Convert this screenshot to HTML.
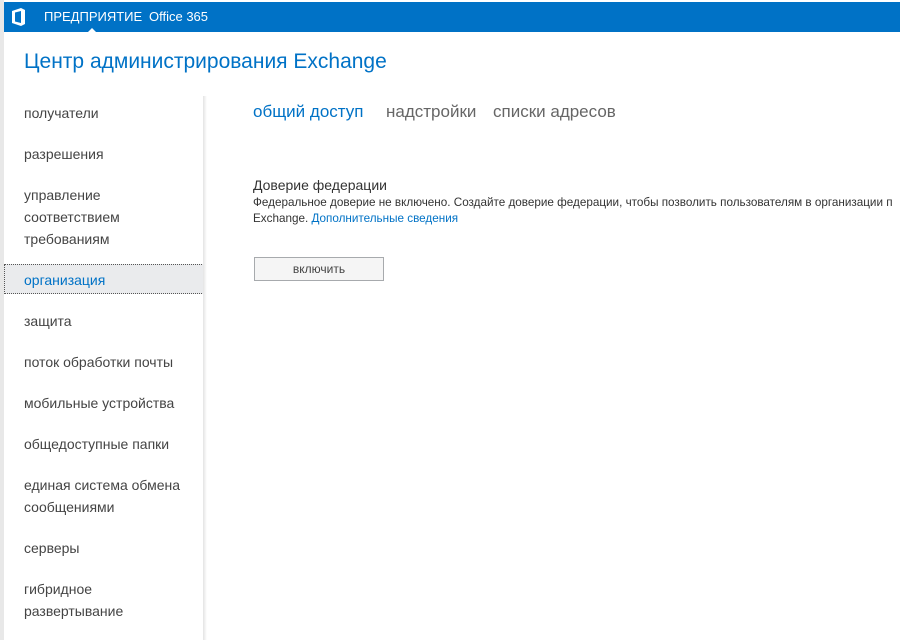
<!DOCTYPE html>
<html><head><meta charset="utf-8"><style>
*{margin:0;padding:0;box-sizing:border-box}
body{width:900px;height:640px;overflow:hidden;background:#fff;font-family:"Liberation Sans","DejaVu Sans",sans-serif;position:relative}
.top{position:absolute;left:4px;top:2px;width:896px;height:30px;background:#0072c6;color:#fff;font-size:13px}
.top span{position:absolute;top:7px}
.caret{position:absolute;left:84px;top:26px;width:0;height:0;border-left:4px solid transparent;border-right:4px solid transparent;border-bottom:4px solid #fff}
.lb{position:absolute;left:0;top:0;width:4px;height:640px;background:#e8e8e8}
h1{position:absolute;left:24px;top:50px;font-weight:normal;font-size:21px;color:#0072c6}
.shadow{position:absolute;left:203px;top:96px;width:4px;height:544px;background:linear-gradient(to right,#e4e4e4,#fff)}
.it{position:absolute;left:20px;font-size:14px;color:#444;line-height:22px}
.sel{position:absolute;left:4px;top:264px;width:200px;height:30px;background:#eaebed;border:1px dotted #555}
.tabs{position:absolute;top:102px;font-size:17px;color:#666}
.t2{position:absolute;left:253px;top:177px;font-size:14px;color:#333}
.t3{position:absolute;left:253px;top:195px;font-size:11.7px;color:#333;line-height:16px;white-space:nowrap}
.t3 a{color:#0072c6;text-decoration:none}
.btn{position:absolute;left:254px;top:257px;width:130px;height:24px;border:1px solid #a7aaad;background:#f5f5f5;font-size:12px;color:#444;text-align:center;line-height:22px}
</style></head><body>
<div class="lb"></div>
<div class="top">
<svg style="position:absolute;left:8px;top:6px" width="14" height="18" viewBox="0 0 14 18"><path d="M0 3 L9 0 L13 2 V16 L9 18 L0 15 Z M3 4.5 V13.5 L9 15 V3 Z" fill="#fff" fill-rule="evenodd"/></svg>
<span style="left:40px">ПРЕДПРИЯТИЕ</span><span style="left:145px">Office 365</span>
<div class="caret"></div></div>
<h1>Центр администрирования Exchange</h1>
<div class="sel"></div>
<div class="shadow"></div>
<div class="it" style="top:102px;left:24px">получатели</div>
<div class="it" style="top:143px;left:24px">разрешения</div>
<div class="it" style="top:184px;left:24px">управление<br>соответствием<br>требованиям</div>
<div class="it" style="top:269px;left:24px;color:#0072c6">организация</div>
<div class="it" style="top:310px;left:24px">защита</div>
<div class="it" style="top:351px;left:24px">поток обработки почты</div>
<div class="it" style="top:392px;left:24px">мобильные устройства</div>
<div class="it" style="top:433px;left:24px">общедоступные папки</div>
<div class="it" style="top:474px;left:24px">единая система обмена<br>сообщениями</div>
<div class="it" style="top:537px;left:24px">серверы</div>
<div class="it" style="top:578px;left:24px">гибридное<br>развертывание</div>
<div class="tabs" style="left:253px;color:#0072c6">общий доступ</div>
<div class="tabs" style="left:386px">надстройки</div>
<div class="tabs" style="left:493px">списки адресов</div>
<div class="t2">Доверие федерации</div>
<div class="t3">Федеральное доверие не включено. Создайте доверие федерации, чтобы позволить пользователям в организации п<br>Exchange. <a>Дополнительные сведения</a></div>
<div class="btn">включить</div>
</body></html>
